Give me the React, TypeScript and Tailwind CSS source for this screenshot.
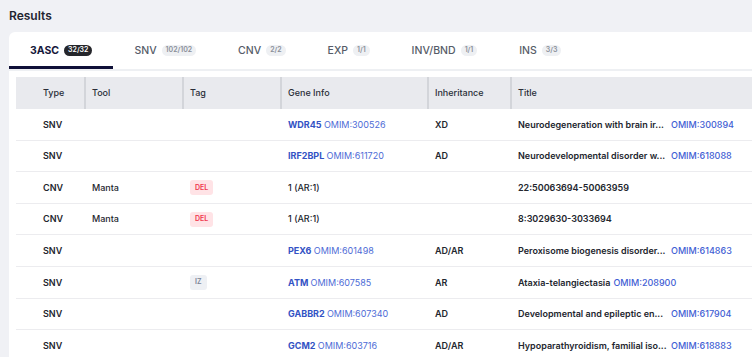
import React from 'react';

type Row = {
    type: string;
    tool?: string;
    tag?: 'DEL' | 'IZ';
    gene?: string;
    geneOmim?: string;
    plainGene?: string;
    inheritance?: string;
    title: string;
    truncate?: boolean;
    titleOmim?: string;
};

const tabs = [
    { label: '3ASC', count: '32/32', active: true },
    { label: 'SNV', count: '102/102' },
    { label: 'CNV', count: '2/2' },
    { label: 'EXP', count: '1/1' },
    { label: 'INV/BND', count: '1/1' },
    { label: 'INS', count: '3/3' },
];

const rows: Row[] = [
    { type: 'SNV', gene: 'WDR45', geneOmim: 'OMIM:300526', inheritance: 'XD', title: 'Neurodegeneration with brain ir...', truncate: true, titleOmim: 'OMIM:300894' },
    { type: 'SNV', gene: 'IRF2BPL', geneOmim: 'OMIM:611720', inheritance: 'AD', title: 'Neurodevelopmental disorder w...', truncate: true, titleOmim: 'OMIM:618088' },
    { type: 'CNV', tool: 'Manta', tag: 'DEL', plainGene: '1 (AR:1)', title: '22:50063694-50063959' },
    { type: 'CNV', tool: 'Manta', tag: 'DEL', plainGene: '1 (AR:1)', title: '8:3029630-3033694' },
    { type: 'SNV', gene: 'PEX6', geneOmim: 'OMIM:601498', inheritance: 'AD/AR', title: 'Peroxisome biogenesis disorder...', truncate: true, titleOmim: 'OMIM:614863' },
    { type: 'SNV', tag: 'IZ', gene: 'ATM', geneOmim: 'OMIM:607585', inheritance: 'AR', title: 'Ataxia-telangiectasia', titleOmim: 'OMIM:208900' },
    { type: 'SNV', gene: 'GABBR2', geneOmim: 'OMIM:607340', inheritance: 'AD', title: 'Developmental and epileptic en...', truncate: true, titleOmim: 'OMIM:617904' },
    { type: 'SNV', gene: 'GCM2', geneOmim: 'OMIM:603716', inheritance: 'AD/AR', title: 'Hypoparathyroidism, familial iso...', truncate: true, titleOmim: 'OMIM:618883' },
];

const cols = 'grid grid-cols-[68px_98px_98px_147px_83px_1fr]';

function Tag({ kind }: { kind: 'DEL' | 'IZ' }) {
    if (kind === 'DEL') {
        return <span className="inline-flex h-[15px] items-center rounded-[3px] bg-[#ffe3e6] px-[5px] text-[7px] font-semibold text-[#f0374f]">DEL</span>;
    }
    return <span className="inline-flex h-[15px] items-center rounded-[3px] bg-[#eef0f4] px-[5px] text-[7px] font-semibold text-[#7a8294]">IZ</span>;
}

export default function App() {
    return (
        <div className="h-[357px] w-[752px] overflow-hidden bg-[#f0f1f5] pl-[9px] pt-[9px] font-['Inter',sans-serif] text-[#1f2430]">
            <h2 className="h-[14px] text-[12px] font-semibold leading-[14px]">Results</h2>

            <div className="mt-[9px] w-[800px] rounded-tl-[6px] bg-white">
                <div className="flex h-[39px] border-b-2 border-[#eef0f3]">
                    {tabs.map((t) => (
                        <div
                            key={t.label}
                            className={`flex h-[37px] items-center gap-[5px] border-b-[3px] px-[21px] pt-[3px] ${t.active ? 'border-[#0f1038]' : 'border-transparent'}`}
                        >
                            <span className={`text-[10.5px] ${t.active ? 'font-bold text-[#15173a]' : 'font-medium text-[#565c68]'}`}>{t.label}</span>
                            <span
                                className={`flex h-[11px] items-center rounded-full px-[4px] text-[7px] font-semibold ${t.active ? 'bg-[#25262b] text-white' : 'bg-[#eef0f3] text-[#8a8f99]'}`}
                            >
                                {t.count}
                            </span>
                        </div>
                    ))}
                </div>

                <div className="px-[7px] pt-[6px]">
                    <div className={`${cols} h-[32px] items-center bg-[#e9eaee] text-[9px] font-medium text-[#2a2e38]`}>
                        <div className="pl-[27px]">Type</div>
                        <div className="flex h-full items-center border-l-2 border-[#d3d5da] pl-[6px]">Tool</div>
                        <div className="flex h-full items-center border-l-2 border-[#d3d5da] pl-[6px]">Tag</div>
                        <div className="flex h-full items-center border-l-2 border-[#d3d5da] pl-[6px]">Gene Info</div>
                        <div className="flex h-full items-center border-l-2 border-[#d3d5da] pl-[6px]">Inheritance</div>
                        <div className="flex h-full items-center border-l-2 border-[#d3d5da] pl-[6px]">Title</div>
                    </div>

                    {rows.map((r, i) => (
                        <div key={i} className={`${cols} h-[31.6px] items-center border-b border-[#ececef] text-[9px] font-semibold text-[#23262e]`}>
                            <div className="pl-[27px]">{r.type}</div>
                            <div className="pl-[8px] font-medium">{r.tool}</div>
                            <div className="pl-[8px]">{r.tag && <Tag kind={r.tag} />}</div>
                            <div className="whitespace-nowrap pl-[8px]">
                                {r.gene ? (
                                    <>
                                        <span className="font-bold text-[#3352c4]">{r.gene}</span>{' '}
                                        <span className="font-normal text-[#4d6bd6]">{r.geneOmim}</span>
                                    </>
                                ) : (
                                    <span className="font-medium">{r.plainGene}</span>
                                )}
                            </div>
                            <div className="pl-[8px]">{r.inheritance}</div>
                            <div className="flex items-center whitespace-nowrap pl-[8px]">
                                <span className={r.truncate ? 'inline-block w-[150px]' : ''}>{r.title}</span>
                                {r.titleOmim && <span className="ml-[3px] font-medium text-[#3f60d4]">{r.titleOmim}</span>}
                            </div>
                        </div>
                    ))}
                </div>
            </div>
        </div>
    );
}
